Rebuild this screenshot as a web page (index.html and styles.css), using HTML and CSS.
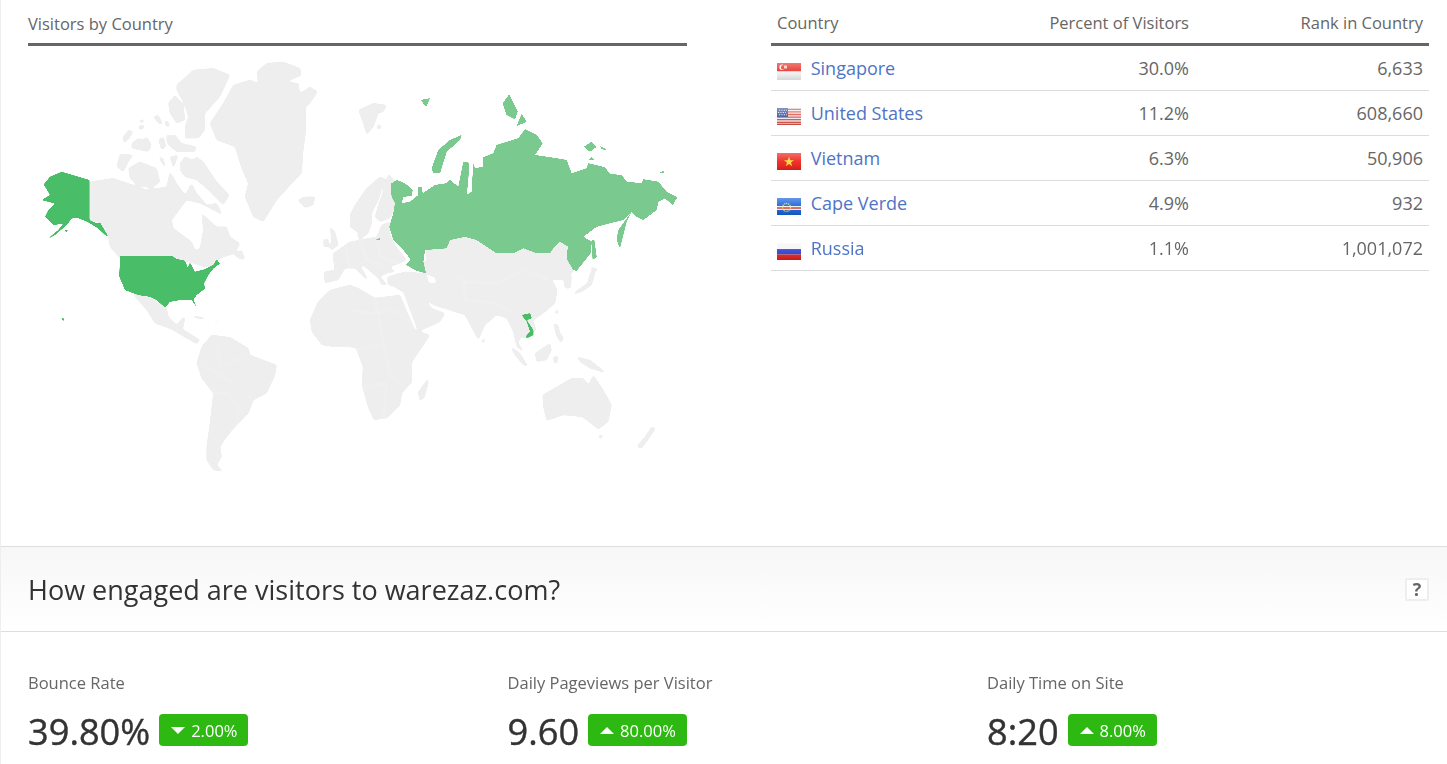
FILE: index.html
```html
<!DOCTYPE html>
<html lang="en">
<head>
    <meta charset="UTF-8">
    <title>warezaz.com</title>
    <link rel="stylesheet" href="styles.css">
</head>
<body>
    <div class="geo">
        <div class="map-panel">
            <h4 class="panel-title">Visitors by Country</h4>
            <svg class="world" viewBox="28 46 659 454" aria-label="World map">
                <defs>
                    <linearGradient id="gloss" x1="0" y1="0" x2="0" y2="1">
                        <stop offset="0" stop-color="#fff" stop-opacity=".35"/>
                        <stop offset=".5" stop-color="#fff" stop-opacity=".08"/>
                        <stop offset="1" stop-color="#000" stop-opacity=".12"/>
                    </linearGradient>
                    <!-- rounds off the polygon corners -->
                    <filter id="soft" x="0" y="0" width="800" height="600" filterUnits="userSpaceOnUse" color-interpolation-filters="sRGB">
                        <feGaussianBlur stdDeviation="1.3"/>
                        <feColorMatrix values="1 0 0 0 0 0 1 0 0 0 0 0 1 0 0 0 0 0 7 -2.4"/>
                        <feGaussianBlur stdDeviation=".4"/>
                    </filter>
                    <filter id="soft-green" x="0" y="0" width="800" height="600" filterUnits="userSpaceOnUse" color-interpolation-filters="sRGB">
                        <feGaussianBlur stdDeviation=".7"/>
                        <feColorMatrix values="1 0 0 0 0 0 1 0 0 0 0 0 1 0 0 0 0 0 5 -1.7"/>
                    </filter>
                </defs>

                <g filter="url(#soft)">
                <!-- north america, arctic -->
                <g class="land" transform="translate(0 40) scale(.3333)">
                    <polygon points="630,250 670,190 700,135 750,120 775,130 770,95 800,70 850,65 900,85 905,105 860,125 895,130 900,160 930,140 953,155 930,190 918,200 918,270 910,330 905,400 885,420 830,480 790,545 760,530 735,470 745,430 725,385 705,320 650,300 640,275"/>
                    <polygon points="530,135 580,90 640,85 690,105 660,170 615,220 615,270 595,295 555,295 555,260 565,230 555,195 530,150"/>
                    <polygon points="505,190 525,165 550,195 555,240 530,250 510,220"/>
                    <polygon points="460,230 475,225 490,255 475,250"/>
                    <polygon points="495,240 505,245 510,262 497,258"/>
                    <polygon points="420,240 430,238 432,247 420,248"/>
                    <polygon points="415,258 432,255 433,265 418,270"/>
                    <polygon points="368,295 385,270 400,275 385,298 372,308"/>
                    <polygon points="395,310 415,295 430,300 440,290 455,315 445,335 420,330 395,325"/>
                    <polygon points="475,300 490,290 498,320 485,330"/>
                    <polygon points="500,285 525,285 545,310 590,320 585,335 530,335 505,315 500,300"/>
                    <polygon points="385,385 420,365 445,375 470,385 480,425 455,445 410,435 390,415"/>
                    <polygon points="350,380 360,342 400,345 385,365 370,395"/>
                    <polygon points="475,350 490,355 500,395 490,375"/>
                    <polygon points="510,350 535,345 520,385"/>
                    <polygon points="540,370 555,350 580,360 590,350 610,365 650,425 688,465 670,495 645,470 625,450 590,420 555,410 540,390"/>
                    <polygon points="268,425 340,415 400,435 440,450 500,440 510,395 530,430 555,465 575,430 590,460 620,495 650,490 668,525 640,510 600,490 560,480 515,540 520,565 575,605 585,630 600,625 610,570 605,520 650,560 680,560 690,590 720,610 705,640 660,655 640,680 610,680 580,670 540,660 365,660 330,620 325,590 300,548 268,540"/>
                    <polygon points="893,480 915,470 945,470 940,495 915,503"/>
                </g>
                <g class="land" transform="translate(0 250) scale(.3333)">
                    <polygon points="700,10 725,0 735,30 715,25"/>
                    <polygon points="400,130 455,145 500,175 505,200 530,225 550,200 555,205 548,238 600,270 590,282 560,265 515,238 465,220 440,180 405,140"/>
                    <polygon points="395,130 435,185 410,150"/>
                    <polygon points="560,195 600,200 635,212 590,205"/>
                    <polygon points="640,212 670,217 645,218"/>
                    <polygon points="590,340 605,290 635,255 690,262 745,295 750,315 830,345 825,375 800,430 760,450 745,490 705,530 680,560 660,590 665,620 650,645 670,665 640,660 620,630 620,590 630,520 640,430 605,385"/>
                    <polygon points="695,635 712,633 705,640"/>
                    <polyline class="border" points="605,340 650,370 700,400 760,450"/>
                    <polyline class="border" points="640,430 680,430 720,470 705,530"/>
                    <polyline class="border" points="650,285 660,350 745,315"/>
                </g>

                <!-- europe -->
                <g class="land" transform="translate(300 170) scale(.3333)">
                    <polygon points="150,135 165,105 200,55 240,20 260,30 245,60 230,100 215,130 215,160 205,190 185,205 170,185 150,170"/>
                    <polygon points="250,65 265,12 282,30 278,70 285,110 270,145 240,155 225,140 235,105"/>
                    <polygon points="100,250 150,215 180,210 230,200 245,165 270,155 268,190 285,225 320,270 300,280 270,290 285,305 260,310 240,320 262,345 245,345 235,325 195,290 180,285 205,330 195,325 165,295 135,295 115,330 75,340 72,305 105,300 100,270"/>
                    <polygon points="90,170 105,185 115,225 95,240 85,230 95,215"/>
                    <polygon points="70,210 85,205 85,230 72,232"/>
                    <polygon points="170,195 185,195 180,210"/>
                    <polygon points="262,322 300,310 350,315 372,325 380,345 340,350 290,350 265,345"/>
                    <polyline class="border" points="135,225 150,290"/>
                    <polyline class="border" points="180,210 200,270 250,290"/>
                    <polyline class="border" points="230,200 240,260 300,280"/>
                </g>
                <g class="land" transform="translate(350 40) scale(.3333)">
                    <polygon points="25,210 70,190 110,195 100,215 85,220 70,260 50,285 40,250"/>
                    <polygon points="85,250 97,265 80,268"/>
                </g>

                <!-- africa, asia, oceania -->
                <polygon class="land" points="350,285 358,288 375,298 400,295 405,307 415,330 430,335 420,350 412,362 412,382 402,393 400,405 387,418 374,420 368,407 362,385 363,367 356,348 350,347 335,347 322,345 312,332 310,320 318,302 330,290"/>
                <g class="land" transform="translate(350 250) scale(.3333)">
                    <polygon points="205,425 235,385 235,400 222,445 208,452"/>
                    <polygon points="160,125 228,150 245,175 285,190 270,215 205,245"/>
                    <polygon points="170,40 228,35 228,-20 300,-40 660,-40 675,60 640,90 605,88 622,120 615,160 580,190 550,210 558,240 530,265 512,262 505,280 525,310 500,290 490,245 470,205 440,195 405,225 385,270 345,195 290,178 250,165 228,148 165,130 115,100 115,80 165,65 215,70 232,80 235,98 260,100 255,82 228,72"/>
                    <polygon points="398,265 405,268 402,280 396,278"/>
                    <polygon points="555,310 600,280 605,300 590,330 560,335"/>
                    <polygon points="480,288 510,310 535,350 520,345 495,315"/>
                    <polygon points="535,350 600,362 570,360"/>
                    <polygon points="610,320 625,318 620,342 612,338"/>
                    <polygon points="680,320 720,330 770,370 720,355 690,335"/>
                    <polygon points="578,435 630,405 665,385 700,385 715,405 730,375 760,420 785,465 775,515 745,538 710,510 695,500 640,495 590,512 580,470"/>
                    <polygon points="745,555 760,555 752,570"/>
                    <polygon points="905,530 917,535 890,575 875,595 860,590 885,560"/>
                    <polygon points="335,615 345,615 340,620"/>
                    <polyline class="border" points="300,60 340,95 440,100 520,60 600,90"/>
                    <polyline class="border" points="340,95 345,150 440,160 490,190"/>
                    <polyline class="border" points="0,180 60,190 130,180 190,230"/>
                    <polyline class="border" points="20,300 100,280 120,370 160,410"/>
                    <polyline class="border" points="40,410 110,400 100,505"/>
                    <polyline class="border" points="75,145 100,280"/>
                </g>
                <g class="land" transform="translate(500 230) scale(.3333)">
                    <polygon points="190,140 215,135 212,175 195,175"/>
                    <polygon points="215,195 240,175 262,160 272,125 285,130 275,165 245,185"/>
                    <polygon points="270,110 295,118 280,130"/>
                    <polygon points="170,235 177,250 165,252"/>
                    <polygon points="160,280 175,285 180,310 190,320 185,340 170,320"/>
                </g>
                </g>

                <g filter="url(#soft-green)">
                <!-- russia -->
                <g class="russia" transform="translate(350 40) scale(.3333)">
                    <polygon points="122,432 140,420 165,430 188,450 185,468 160,470 155,490 180,485 205,465 205,440 215,440 218,460 255,435 290,430 300,420 325,440 340,365 357,368 355,420 350,465 365,455 370,370 375,385 400,380 400,352 430,340 440,315 505,295 525,268 560,285 578,310 555,345 620,355 650,360 665,400 710,385 715,370 765,382 780,402 815,405 830,425 875,430 880,418 925,425 950,455 982,472 968,495 945,475 925,485 920,510 880,540 860,530 845,515 820,540 780,550 740,560 700,590 725,605 722,640 680,692 670,690 652,660 650,640 655,620 630,605 610,625 600,640 560,640 520,625 490,640 440,640 410,620 380,600 345,590 300,600 290,625 225,630 220,665 228,700 200,692 168,675 182,658 160,630 130,600 118,560 130,520 135,490 125,470"/>
                    <polygon points="725,600 733,600 740,650 728,660"/>
                    <polygon points="845,515 830,545 810,625 800,600 805,570"/>
                    <polygon points="245,385 265,330 300,300 335,285 330,300 290,335 270,400 250,400"/>
                    <polygon points="458,190 478,163 503,215 495,238 470,225"/>
                    <polygon points="500,258 515,222 530,245"/>
                    <polygon points="212,180 240,175 228,200"/>
                    <polygon points="702,320 725,305 740,320 720,335"/>
                    <polygon points="750,318 772,330 755,328"/>
                    <polygon points="715,360 725,350 733,360"/>
                    <polygon points="925,400 940,392 942,400"/>
                    <polygon points="75,598 90,595 90,600"/>
                </g>

                <!-- top countries -->
                <g class="top-country" transform="translate(0 40) scale(.3333)">
                    <polygon points="130,435 150,410 185,395 268,420 268,540 290,550 300,548 325,590 315,585 295,565 262,545 230,532 215,535 200,555 165,585 140,598 175,570 190,550 160,555 135,530 145,510 165,490 125,480 150,465 135,440"/>
                    <polygon points="195,570 205,568 197,577"/>
                </g>
                <g class="top-country" transform="translate(0 250) scale(.3333)">
                    <polygon points="360,17 515,17 530,27 555,32 563,52 570,38 585,65 612,58 640,45 650,28 660,40 640,55 625,75 612,100 615,115 590,135 580,150 592,175 575,150 540,150 510,155 495,172 470,150 450,140 415,135 375,120 358,80"/>
                    <polygon points="183,203 193,206 190,213"/>
                </g>
                <g class="top-country" transform="translate(350 250) scale(.3333)">
                    <polygon points="515,195 540,190 545,205 530,210 550,240 550,255 530,265 528,258 540,245 530,215"/>
                </g>
                </g>
            </svg>
        </div>

        <table class="country-table">
            <thead>
                <tr>
                    <th>Country</th>
                    <th class="num">Percent of Visitors</th>
                    <th class="num rank">Rank in Country</th>
                </tr>
            </thead>
            <tbody>
                <tr>
                    <td>
                        <svg class="flag" viewBox="0 0 24 17">
                            <rect width="24" height="8.5" fill="#e5332a"/>
                            <rect y="8.5" width="24" height="8.5" fill="#f4f4f4"/>
                            <circle cx="5" cy="4.2" r="2.6" fill="#fff"/>
                            <circle cx="6.2" cy="4.2" r="2.3" fill="#e5332a"/>
                            <rect x="7" y="2.5" width="3" height="3" fill="#f8c9c5"/>
                            <rect width="24" height="17" fill="url(#gloss)"/>
                        </svg>
                        <a href="#">Singapore</a>
                    </td>
                    <td class="num">30.0%</td>
                    <td class="num">6,633</td>
                </tr>
                <tr>
                    <td>
                        <svg class="flag" viewBox="0 0 24 17">
                            <rect width="24" height="17" fill="#f3eeee"/>
                            <path d="M0 1.3h24M0 3.9h24M0 6.5h24M0 9.1h24M0 11.7h24M0 14.3h24M0 16.4h24" stroke="#d9534a" stroke-width="1.3"/>
                            <rect width="11" height="9" fill="#43589f"/>
                            <path d="M2 2.2h8M1 4.5h8M2 6.8h8" stroke="#dfe4f2" stroke-width="1.1" stroke-dasharray="1.2 1.2"/>
                            <rect width="24" height="17" fill="url(#gloss)"/>
                        </svg>
                        <a href="#">United States</a>
                    </td>
                    <td class="num">11.2%</td>
                    <td class="num">608,660</td>
                </tr>
                <tr>
                    <td>
                        <svg class="flag" viewBox="0 0 24 17">
                            <rect width="24" height="17" fill="#ee2019"/>
                            <polygon points="12,3.6 13.3,7.2 17,7.2 14,9.5 15.2,13.2 12,11 8.8,13.2 10,9.5 7,7.2 10.7,7.2" fill="#fbd92f"/>
                            <rect width="24" height="17" fill="url(#gloss)"/>
                        </svg>
                        <a href="#">Vietnam</a>
                    </td>
                    <td class="num">6.3%</td>
                    <td class="num">50,906</td>
                </tr>
                <tr>
                    <td>
                        <svg class="flag" viewBox="0 0 24 17">
                            <rect width="24" height="17" fill="#1460d8"/>
                            <rect y="8" width="24" height="4" fill="#f2f2f2"/>
                            <rect y="9.2" width="24" height="1.6" fill="#d8413a"/>
                            <circle cx="9.5" cy="9.5" r="4" fill="none" stroke="#e6d35a" stroke-width="1.4" stroke-dasharray="1.2 .8"/>
                            <rect width="24" height="17" fill="url(#gloss)"/>
                        </svg>
                        <a href="#">Cape Verde</a>
                    </td>
                    <td class="num">4.9%</td>
                    <td class="num">932</td>
                </tr>
                <tr>
                    <td>
                        <svg class="flag" viewBox="0 0 24 17">
                            <rect width="24" height="6" fill="#f5f5f5"/>
                            <rect y="6" width="24" height="5.5" fill="#2c3fd0"/>
                            <rect y="11.5" width="24" height="5.5" fill="#e0201c"/>
                            <rect width="24" height="17" fill="url(#gloss)"/>
                        </svg>
                        <a href="#">Russia</a>
                    </td>
                    <td class="num">1.1%</td>
                    <td class="num">1,001,072</td>
                </tr>
            </tbody>
        </table>
    </div>

    <div class="section-head">
        <h2>How engaged are visitors to warezaz.com?</h2>
        <span class="help">?</span>
    </div>

    <div class="metrics">
        <div class="metric">
            <h4>Bounce Rate</h4>
            <div class="metric-value">
                <strong>39.80%</strong>
                <span class="delta"><i class="arrow-down"></i>2.00%</span>
            </div>
        </div>
        <div class="metric">
            <h4>Daily Pageviews per Visitor</h4>
            <div class="metric-value">
                <strong>9.60</strong>
                <span class="delta"><i class="arrow-up"></i>80.00%</span>
            </div>
        </div>
        <div class="metric">
            <h4>Daily Time on Site</h4>
            <div class="metric-value">
                <strong>8:20</strong>
                <span class="delta"><i class="arrow-up"></i>8.00%</span>
            </div>
        </div>
    </div>
</body>
</html>
```

FILE: styles.css
```css
html {
    overflow: hidden;
}
body {
    font-family: "Open Sans", "Liberation Sans", sans-serif;
    margin: 0;
    height: 764px;
    overflow: hidden;
    background: #fff;
    color: #666;
    border-left: 1px solid #eee;
}
.geo {
    display: flex;
    justify-content: space-between;
    align-items: flex-start;
    height: 546px;
    padding: 0 18px 0 27px;
    box-sizing: border-box;
}
.map-panel {
    width: 659px;
}
.panel-title {
    margin: 0;
    height: 43px;
    line-height: 48px;
    font-size: 16.5px;
    font-weight: 400;
    border-bottom: 3px solid #666;
}
.world {
    display: block;
    width: 659px;
    height: 454px;
}
.land {
    fill: #eee;
}
.border {
    fill: none;
    stroke: #f7f7f7;
    stroke-width: 2;
}
.russia {
    fill: #7ac98f;
}
.top-country {
    fill: #49bd68;
}
.country-table {
    width: 658px;
    border-collapse: separate;
    border-spacing: 0;
    font-size: 18px;
}
.country-table th {
    height: 46px;
    padding: 1px 6px 0;
    box-sizing: border-box;
    font-size: 16.5px;
    font-weight: 400;
    text-align: left;
    border-bottom: 3px solid #666;
}
.country-table td {
    height: 45px;
    padding: 0 6px;
    box-sizing: border-box;
    border-bottom: 1px solid #ddd;
}
.country-table .num {
    text-align: right;
}
.country-table .rank {
    width: 234px;
}
.country-table a {
    color: #4f74c6;
    text-decoration: none;
}
.flag {
    width: 24px;
    height: 17px;
    margin-right: 5px;
    vertical-align: -5px;
}
.section-head {
    display: flex;
    align-items: center;
    justify-content: space-between;
    height: 86px;
    padding: 0 18px 0 27px;
    box-sizing: border-box;
    border-top: 1px solid #ddd;
    border-bottom: 1px solid #ddd;
    background: linear-gradient(#f7f7f7, #fff);
}
.section-head h2 {
    margin: 0;
    font-size: 27px;
    font-weight: 400;
    color: #333;
}
.help {
    width: 24px;
    height: 23px;
    box-sizing: border-box;
    border: 2px solid #eee;
    border-radius: 2px;
    background: #fff;
    font-size: 18px;
    font-weight: 700;
    line-height: 19px;
    text-align: center;
}
.metrics {
    display: grid;
    grid-template-columns: 479.5px 479.5px 1fr;
    padding: 40px 18px 0 27px;
}
.metric h4 {
    margin: 0 0 16px;
    font-size: 16.5px;
    font-weight: 400;
    line-height: 22px;
}
.metric-value {
    display: flex;
    align-items: center;
    gap: 9px;
    height: 42px;
}
.metric-value strong {
    font-size: 36.2px;
    font-weight: 400;
    -webkit-text-stroke: .4px #333;
    line-height: 42px;
    color: #333;
}
.delta {
    display: flex;
    align-items: center;
    height: 32px;
    margin-top: -2px;
    padding: 0 11px 0 12px;
    border-radius: 4px;
    background: #2db911;
    color: #fff;
    font-size: 16.5px;
}
.arrow-down,
.arrow-up {
    width: 0;
    height: 0;
    margin-right: 6px;
    border-left: 7px solid transparent;
    border-right: 7px solid transparent;
}
.arrow-down {
    border-top: 7px solid #fff;
}
.arrow-up {
    border-bottom: 7px solid #fff;
}
```
